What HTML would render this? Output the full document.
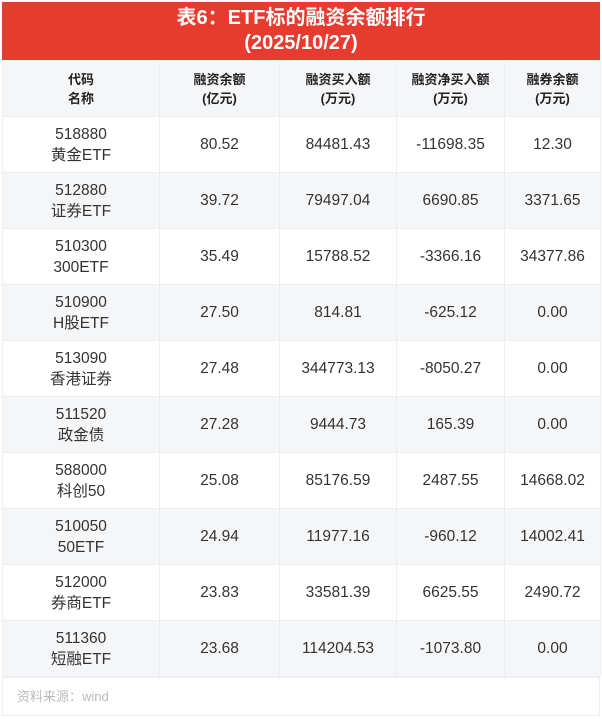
<!DOCTYPE html>
<html><head><meta charset="utf-8"><style>
body{margin:0;background:#fff;width:602px;height:719px;overflow:hidden;font-family:"Liberation Sans","Noto Sans CJK SC",sans-serif;}
.t{position:absolute;left:2px;top:2px;width:598px;height:58px;background:#e63b2e;color:#fff;font-weight:bold;font-size:20px;line-height:25px;text-align:center;padding-top:4px;box-sizing:border-box;}
table{position:absolute;left:2px;top:60px;width:598px;border-collapse:collapse;table-layout:fixed;}
td{border:1px solid #eceef1;text-align:center;color:#333;font-size:15.5px;line-height:21px;padding:0;height:55px;}
tr.h td{font-weight:bold;font-size:13px;line-height:19px;background:#f5f6f8;color:#222;height:55px;}
tr.g td{background:#f5f6f8;}
.f{position:absolute;left:2px;top:677px;width:598px;height:39px;border:1px solid #eceef1;box-sizing:border-box;color:#bbb;font-size:13px;line-height:38px;padding-left:14px;}
</style></head><body>
<div class="t">表6：ETF标的融资余额排行<br>(2025/10/27)</div>
<table>
<colgroup><col style="width:157px"><col style="width:120px"><col style="width:117px"><col style="width:108px"><col style="width:96px"></colgroup>
<tr class="h"><td>代码<br>名称</td><td>融资余额<br>(亿元)</td><td>融资买入额<br>(万元)</td><td>融资净买入额<br>(万元)</td><td>融券余额<br>(万元)</td></tr>
<tr><td>518880<br>黄金ETF</td><td>80.52</td><td>84481.43</td><td>-11698.35</td><td>12.30</td></tr>
<tr class="g"><td>512880<br>证券ETF</td><td>39.72</td><td>79497.04</td><td>6690.85</td><td>3371.65</td></tr>
<tr><td>510300<br>300ETF</td><td>35.49</td><td>15788.52</td><td>-3366.16</td><td>34377.86</td></tr>
<tr class="g"><td>510900<br>H股ETF</td><td>27.50</td><td>814.81</td><td>-625.12</td><td>0.00</td></tr>
<tr><td>513090<br>香港证券</td><td>27.48</td><td>344773.13</td><td>-8050.27</td><td>0.00</td></tr>
<tr class="g"><td>511520<br>政金债</td><td>27.28</td><td>9444.73</td><td>165.39</td><td>0.00</td></tr>
<tr><td>588000<br>科创50</td><td>25.08</td><td>85176.59</td><td>2487.55</td><td>14668.02</td></tr>
<tr class="g"><td>510050<br>50ETF</td><td>24.94</td><td>11977.16</td><td>-960.12</td><td>14002.41</td></tr>
<tr><td>512000<br>券商ETF</td><td>23.83</td><td>33581.39</td><td>6625.55</td><td>2490.72</td></tr>
<tr class="g"><td>511360<br>短融ETF</td><td>23.68</td><td>114204.53</td><td>-1073.80</td><td>0.00</td></tr>
</table>
<div class="f">资料来源：wind</div>
</body></html>
